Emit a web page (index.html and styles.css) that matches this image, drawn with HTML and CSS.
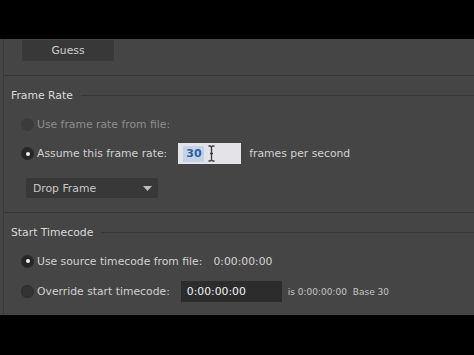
FILE: index.html
```html
<!DOCTYPE html>
<html lang="en">
<head>
    <meta charset="UTF-8">
    <meta name="viewport" content="width=device-width, initial-scale=1.0">
    <title>Interpret Footage</title>
    <link rel="stylesheet" href="styles.css">
</head>
<body>
    <div class="letterbox"></div>

    <div class="panel">
        <div class="frame">
            <div class="guess-area">
                <button class="btn">Guess</button>
            </div>

            <!-- Frame Rate -->
            <section class="group frame-rate">
                <div class="group-title"><span>Frame Rate</span><i class="rule"></i></div>

                <div class="row disabled">
                    <span class="radio"></span>
                    <label>Use frame rate from file:</label>
                </div>

                <div class="row row-input">
                    <span class="radio checked"></span>
                    <label>Assume this frame rate:</label>
                    <div class="rate-input">
                        <span class="sel">30</span>
                        <svg class="ibeam" width="9" height="17" viewBox="0 0 9 17">
                            <path d="M1.5 1 H3 Q4.5 1 4.5 2.5 Q4.5 1 6 1 H7.5 M4.5 2.5 V14.5 M1.5 16 H3 Q4.5 16 4.5 14.5 Q4.5 16 6 16 H7.5 M3 8.5 H6" fill="none" stroke="#3a3a3a" stroke-width="1.3"/>
                        </svg>
                    </div>
                    <span class="unit">frames per second</span>
                </div>

                <div class="dropdown">
                    <span>Drop Frame</span>
                    <svg width="9" height="5" viewBox="0 0 9 5"><path d="M0 0 H9 L4.5 5 Z" fill="#bdbdbd"/></svg>
                </div>
            </section>

            <!-- Start Timecode -->
            <section class="group start-tc">
                <div class="group-title"><span>Start Timecode</span><i class="rule"></i></div>

                <div class="row">
                    <span class="radio checked"></span>
                    <label>Use source timecode from file:</label>
                    <span class="tc-value">0:00:00:00</span>
                </div>

                <div class="row row-input">
                    <span class="radio"></span>
                    <label>Override start timecode:</label>
                    <div class="tc-input">0:00:00:00</div>
                    <span class="tc-note">is 0:00:00:00&nbsp; Base 30</span>
                </div>
            </section>
        </div>
    </div>

    <div class="letterbox"></div>
</body>
</html>
```

FILE: styles.css
```css
* {
    box-sizing: border-box;
    margin: 0;
    padding: 0;
}

body {
    background: #000;
    font-family: "DejaVu Sans", sans-serif;
    font-size: 10.8px;
    color: #d2d2d2;
    overflow: hidden;
}

.letterbox {
    height: 39px;
    background: #000;
}

.panel {
    height: 276px;
    background: #454545;
    overflow: hidden;
    padding-left: 3px;
}

.frame {
    border-left: 1px solid #383838;
    height: 100%;
}

.guess-area {
    height: 37px;
    padding-top: 1px;
    border-bottom: 1px solid #363636;
}

.btn {
    display: block;
    margin-left: 18px;
    width: 92px;
    height: 21px;
    border: none;
    background: #383838;
    color: #cfcfcf;
    font-family: inherit;
    font-size: 10.8px;
}

.group {
    padding-top: 12px;
}

.frame-rate {
    padding-bottom: 14px;
    border-bottom: 1px solid #363636;
}

.group-title {
    display: flex;
    align-items: center;
    height: 14px;
    color: #dadada;
}

.group-title span {
    margin-left: 7px;
    margin-right: 8px;
}

.rule {
    flex: 1;
    border-top: 1px solid #363636;
}

.row {
    display: flex;
    align-items: center;
    height: 20px;
    margin-top: 12px;
}

.row-input {
    height: 21px;
    margin-top: 9px;
}

.start-tc .row-input {
    margin-top: 10px;
}

.radio {
    width: 13px;
    height: 13px;
    margin-left: 17px;
    margin-right: 3px;
    border-radius: 50%;
    background: #333;
    box-shadow: inset 0 0 0 1px #2e2e2e;
    display: flex;
    align-items: center;
    justify-content: center;
}

.radio.checked {
    background: #262626;
}

.radio.checked::after {
    content: "";
    width: 4px;
    height: 4px;
    border-radius: 50%;
    background: #f2f2f2;
}

.disabled .radio {
    background: #3b3b3b;
    box-shadow: none;
}

.disabled label {
    color: #8e8e8e;
}

label {
    margin-right: 11px;
}

.rate-input {
    display: flex;
    align-items: center;
    width: 63px;
    height: 21px;
    padding-left: 5px;
    background: #e3e3e8;
}

.sel {
    padding: 0 2px 0 3px;
    height: 16px;
    line-height: 16px;
    background: #c3d3ea;
    color: #2f5e9c;
    font-weight: bold;
    font-size: 11px;
}

.ibeam {
    margin-left: 3px;
}

.unit {
    margin-left: 8px;
}

.dropdown {
    display: flex;
    align-items: center;
    justify-content: space-between;
    width: 132px;
    height: 20px;
    margin: 14px 0 0 22px;
    padding: 0 6px 0 7px;
    background: #383838;
    color: #c8c8c8;
}

.tc-value {
    color: #d6d6d6;
}

.tc-input {
    display: flex;
    align-items: center;
    width: 101px;
    height: 21px;
    padding-left: 6px;
    background: #2c2c2c;
    color: #f4f4f4;
}

.tc-note {
    margin-left: 6px;
    font-size: 9px;
    color: #c6c6c6;
}
```
